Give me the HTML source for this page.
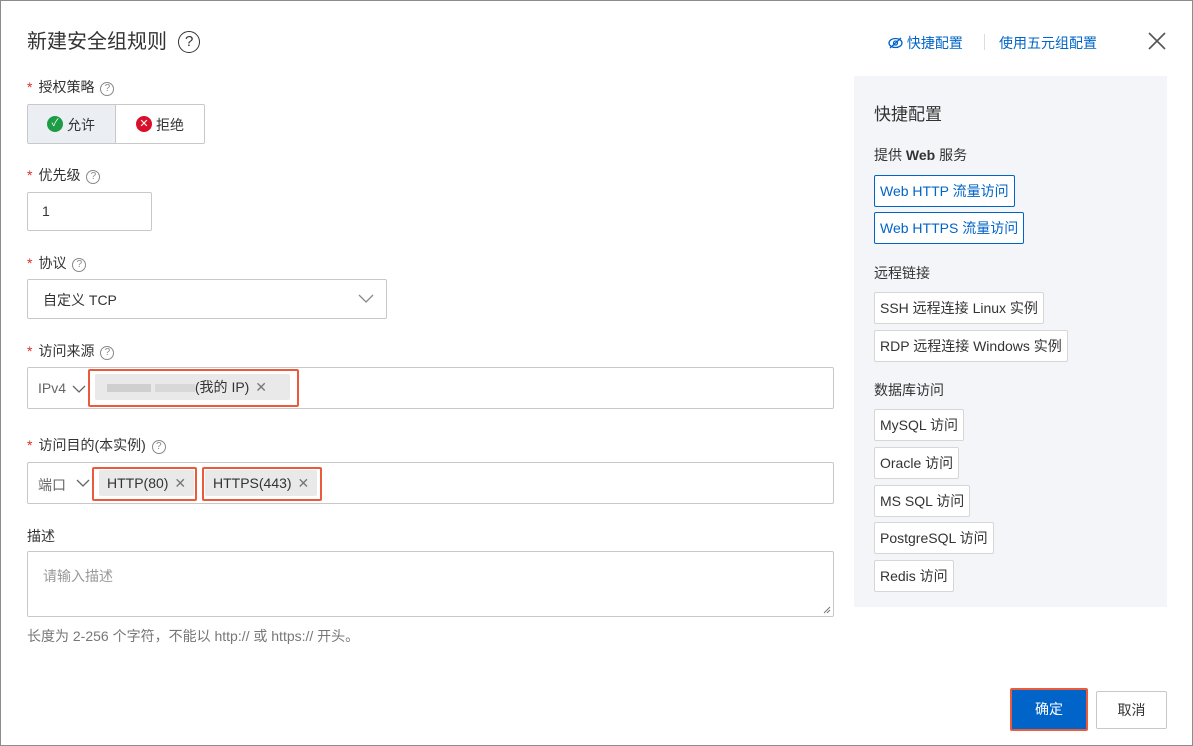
<!DOCTYPE html>
<html><head><meta charset="utf-8"><style>
*{box-sizing:border-box;margin:0;padding:0}
body{width:1193px;height:746px;background:#fff;font-family:"Liberation Sans","Noto Sans CJK SC",sans-serif;color:#333;font-size:14px;position:relative;overflow:hidden}
.frame{position:absolute;left:0;top:0;width:1193px;height:746px;border:1px solid #8c8c8c}
.a{position:absolute}
.lbl{position:absolute;left:27px;font-size:14px;color:#333;line-height:18px}
.lbl .s{color:#d93026;margin-right:6px}
.q{display:inline-block;width:14px;height:14px;border:1px solid #888;border-radius:50%;font-size:10px;line-height:12px;text-align:center;color:#888;margin-left:6px;vertical-align:1px}
.box{position:absolute;border:1px solid #c8c8c8;border-radius:2px;background:#fff}
.tag{position:absolute;background:#e9e9e9;border-radius:2px;height:26px;line-height:26px;padding:0 8px;font-size:14px;color:#333}
.x{color:#777;margin-left:2px}
.red{position:absolute;border:2px solid #ec5a3c;border-radius:2px}
.panel{position:absolute;left:854px;top:76px;width:313px;height:531px;background:#f3f5f8}
.pb{position:absolute;left:20px;height:32px;line-height:30px;padding:0 5px;border:1px solid #d6d6d6;background:#fff;font-size:14px;color:#333;border-radius:2px;white-space:nowrap}
.pb.b{border-color:#0064c8;color:#0064c8}
.ph{position:absolute;left:20px;font-size:14px;color:#333}
</style></head><body>
<div class="frame"></div>
<div class="a" style="left:27px;top:29px;font-size:20px;color:#333;line-height:26px">新建安全组规则&nbsp; <span style="display:inline-block;width:22px;height:22px;border:1.5px solid #333;border-radius:50%;font-size:15px;line-height:19px;text-align:center;vertical-align:2px">?</span></div>
<div class="a" style="left:888px;top:33px;font-size:14px;color:#0064c8">
<svg width="15" height="12" viewBox="0 0 15 12" style="vertical-align:-1px"><ellipse cx="7.5" cy="6" rx="6.5" ry="4.5" fill="none" stroke="#0064c8" stroke-width="1.3"/><circle cx="7.5" cy="6" r="2" fill="none" stroke="#0064c8" stroke-width="1.3"/><line x1="2" y1="11" x2="13" y2="1" stroke="#0064c8" stroke-width="1.3"/></svg> 快捷配置</div>
<div class="a" style="left:984px;top:34px;width:1px;height:16px;background:#ddd"></div>
<div class="a" style="left:999px;top:33px;font-size:14px;color:#0064c8">使用五元组配置</div>
<svg class="a" style="left:1148px;top:32px" width="18" height="18" viewBox="0 0 18 18"><path d="M1 1L17 17M17 1L1 17" stroke="#555" stroke-width="1.6"/></svg>

<div class="lbl" style="top:78px"><span class="s">*</span>授权策略<span class="q">?</span></div>
<div class="box" style="left:27px;top:104px;width:178px;height:40px;overflow:hidden">
<div class="a" style="left:0;top:0;width:88px;height:38px;background:#ebeef3;border-right:1px solid #c8c8c8"></div>
<div class="a" style="left:19px;top:11px;width:16px;height:16px;border-radius:50%;background:#1e9c45;color:#fff;font-size:10px;line-height:16px;text-align:center">✓</div>
<div class="a" style="left:39px;top:10px">允许</div>
<div class="a" style="left:108px;top:11px;width:16px;height:16px;border-radius:50%;background:#d8102a;color:#fff;font-size:11px;line-height:16px;text-align:center">✕</div>
<div class="a" style="left:128px;top:10px">拒绝</div>
</div>

<div class="lbl" style="top:166px"><span class="s">*</span>优先级<span class="q">?</span></div>
<div class="box" style="left:27px;top:192px;width:125px;height:39px"><span class="a" style="left:14px;top:10px">1</span></div>

<div class="lbl" style="top:254px"><span class="s">*</span>协议<span class="q">?</span></div>
<div class="box" style="left:27px;top:279px;width:360px;height:40px"><span class="a" style="left:15px;top:10px">自定义 TCP</span>
<svg class="a" style="left:330px;top:14px" width="16" height="10"><path d="M1 1L8 8L15 1" fill="none" stroke="#888" stroke-width="1.3"/></svg></div>

<div class="lbl" style="top:342px"><span class="s">*</span>访问来源<span class="q">?</span></div>
<div class="box" style="left:27px;top:367px;width:807px;height:42px"><span class="a" style="left:10px;top:12px;color:#666">IPv4</span>
<svg class="a" style="left:44px;top:17px" width="14" height="8"><path d="M1 1L7 7L13 1" fill="none" stroke="#666" stroke-width="1.3"/></svg></div>
<div class="tag" style="left:95px;top:374px;width:195px;padding-left:12px"><span style="display:inline-block;width:44px;height:8px;background:#cfcfcf;vertical-align:middle"></span> <span style="display:inline-block;width:40px;height:8px;background:#d8d8d8;vertical-align:middle"></span>(我的 IP) <span class="x">✕</span></div>
<div class="red" style="left:88px;top:369px;width:211px;height:38px"></div>

<div class="lbl" style="top:436px"><span class="s">*</span>访问目的(本实例)<span class="q">?</span></div>
<div class="box" style="left:27px;top:462px;width:807px;height:42px"><span class="a" style="left:10px;top:12px;color:#666">端口</span>
<svg class="a" style="left:48px;top:16px" width="14" height="8"><path d="M1 1L7 7L13 1" fill="none" stroke="#666" stroke-width="1.3"/></svg></div>
<div class="tag" style="left:99px;top:470px">HTTP(80) <span class="x">✕</span></div>
<div class="red" style="left:92px;top:467px;width:105px;height:34px"></div>
<div class="tag" style="left:205px;top:470px">HTTPS(443) <span class="x">✕</span></div>
<div class="red" style="left:202px;top:467px;width:120px;height:34px"></div>

<div class="lbl" style="top:527px">描述</div>
<div class="box" style="left:27px;top:551px;width:807px;height:66px"><span class="a" style="left:15px;top:14px;color:#999">请输入描述</span>
<svg class="a" style="right:2px;bottom:2px" width="8" height="8"><path d="M7 1L1 7M7 4L4 7" stroke="#777"/></svg></div>
<div class="a" style="left:27px;top:626px;color:#777;font-size:14px">长度为 2-256 个字符，不能以 http:// 或 https:// 开头。</div>

<div class="panel">
<div class="a" style="left:20px;top:24px;font-size:17px;color:#333">快捷配置</div>
<div class="ph" style="top:69px">提供 <b>Web</b> 服务</div>
<div class="pb b" style="top:99px">Web HTTP 流量访问</div>
<div class="pb b" style="top:136px">Web HTTPS 流量访问</div>
<div class="ph" style="top:187px">远程链接</div>
<div class="pb" style="top:216px">SSH 远程连接 Linux 实例</div>
<div class="pb" style="top:254px">RDP 远程连接 Windows 实例</div>
<div class="ph" style="top:304px">数据库访问</div>
<div class="pb" style="top:333px">MySQL 访问</div>
<div class="pb" style="top:371px">Oracle 访问</div>
<div class="pb" style="top:409px">MS SQL 访问</div>
<div class="pb" style="top:446px">PostgreSQL 访问</div>
<div class="pb" style="top:484px">Redis 访问</div>
</div>

<div class="a" style="left:1010px;top:688px;width:78px;height:43px;border:2px solid #ec5a3c;border-radius:2px;background:#0064c8;color:#fff;text-align:center;line-height:39px">确定</div>
<div class="a" style="left:1096px;top:691px;width:71px;height:38px;border:1px solid #c8c8c8;border-radius:2px;text-align:center;line-height:36px">取消</div>
</body></html>
